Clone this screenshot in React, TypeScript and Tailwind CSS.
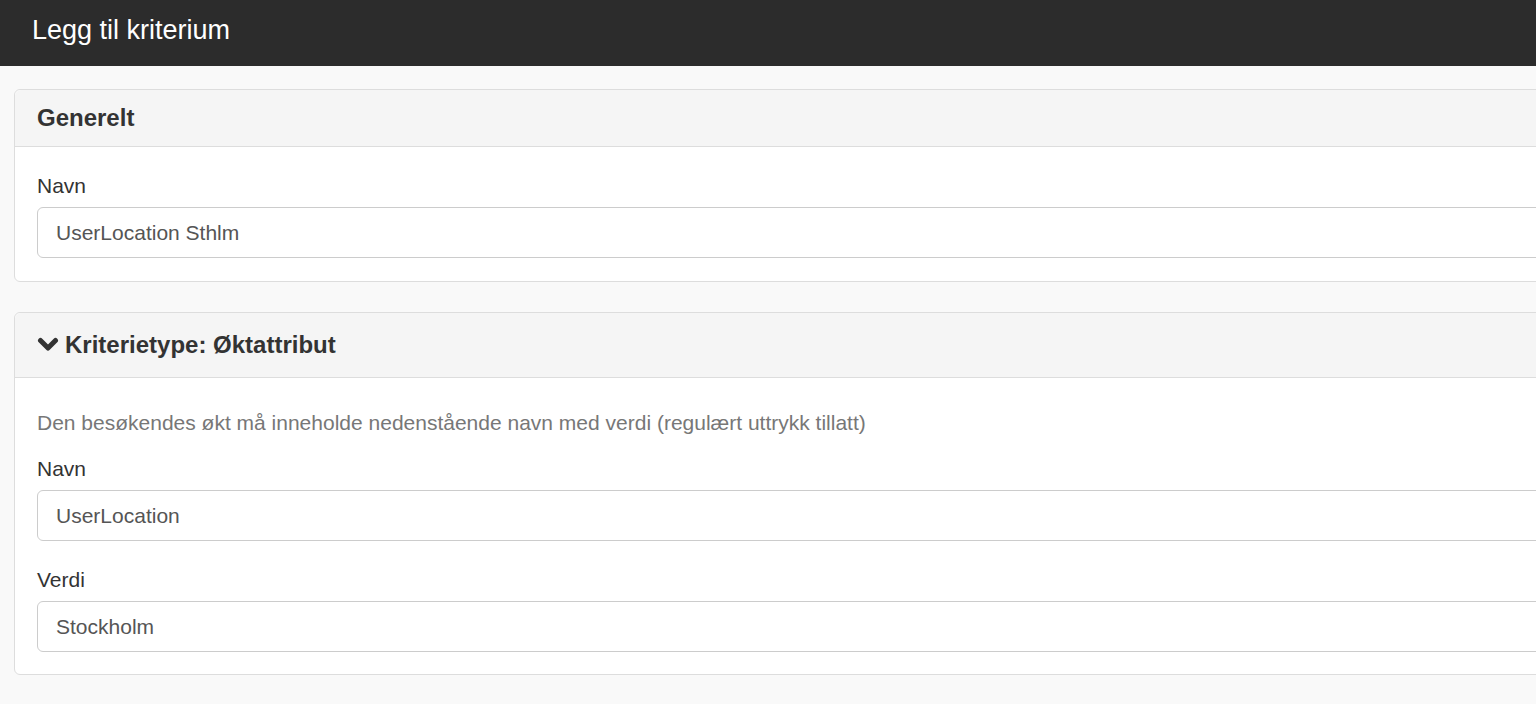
import type { ReactNode } from 'react'

function ChevronDown() {
  return (
    <svg width="22" height="16" viewBox="0 0 22 16" className="mr-[6px] shrink-0">
      <path
        d="M3.5 3.5 L11 11 L18.5 3.5"
        fill="none"
        stroke="#333"
        strokeWidth="5"
        strokeLinecap="round"
        strokeLinejoin="round"
      />
    </svg>
  )
}

function Panel({ heading, children, tall }: { heading: ReactNode; children: ReactNode; tall?: boolean }) {
  return (
    <div className="rounded-[6px] border border-[#dddddd] bg-white">
      <div
        className={`flex items-center rounded-t-[6px] border-b border-[#dddddd] bg-[#f5f5f5] px-[22px] ${
          tall ? 'h-[65px]' : 'h-[57px]'
        }`}
      >
        <h3 className="flex items-center text-[24px] font-bold leading-none text-[#333333]">{heading}</h3>
      </div>
      {children}
    </div>
  )
}

function Field({ label, value }: { label: string; value: string }) {
  return (
    <div>
      <label className="block text-[21px] leading-[30px] text-[#333333]">{label}</label>
      <input
        readOnly
        value={value}
        className="mt-[6px] block h-[51px] w-full rounded-[6px] border border-[#cccccc] bg-white px-[18px] text-[21px] text-[#555555] outline-none"
      />
    </div>
  )
}

export default function App() {
  return (
    <div className="h-[704px] w-[1536px] overflow-hidden bg-[#f9f9f9] font-['Liberation_Sans',Arial,sans-serif]">
      {/* Topp */}
      <div className="flex h-[66px] items-center bg-[#2c2c2c] pl-[32px]">
        <h1 className="pb-[6px] text-[27px] leading-none text-white">Legg til kriterium</h1>
      </div>

      <div className="w-[1620px] pl-[14px] pt-[23px]">
        {/* Generelt */}
        <Panel heading="Generelt">
          <div className="px-[22px] pb-[23px] pt-[24px]">
            <Field label="Navn" value="UserLocation Sthlm" />
          </div>
        </Panel>

        {/* Kriterietype */}
        <div className="mt-[30px]">
          <Panel
            tall
            heading={
              <>
                <ChevronDown />
                Kriterietype: Øktattribut
              </>
            }
          >
            <div className="px-[22px] pb-[22px] pt-[30px]">
              <p className="text-[21px] leading-[30px] text-[#777777]">
                Den besøkendes økt må inneholde nedenstående navn med verdi (regulært uttrykk tillatt)
              </p>
              <div className="mt-[16px]">
                <Field label="Navn" value="UserLocation" />
              </div>
              <div className="mt-[24px]">
                <Field label="Verdi" value="Stockholm" />
              </div>
            </div>
          </Panel>
        </div>
      </div>
    </div>
  )
}
